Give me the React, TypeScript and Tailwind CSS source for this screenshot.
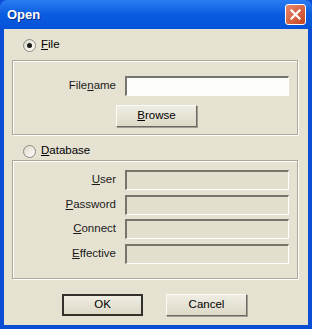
import React from 'react';

const font = { fontFamily: '"Liberation Sans", Arial, sans-serif' };

function Radio({ checked }: { checked?: boolean }) {
  return (
    <span className="w-[13px] h-[13px] rounded-full bg-gradient-to-br from-[#dcd8c8] to-white border border-[#8c8a80] flex items-center justify-center">
      {checked && <span className="w-[5px] h-[5px] rounded-full bg-[#1b1b1b]" />}
    </span>
  );
}

function Field({ label, hot, rest, enabled }: { label?: string; hot: string; rest: string; enabled?: boolean }) {
  return (
    <div className="flex items-center h-[20px]">
      <span className="w-[104px] pr-[1px] text-right text-[#1a1a1a]">
        {label}
        <span className="underline">{hot}</span>
        {rest}
      </span>
      <div
        className={`ml-[8px] flex-1 h-[20px] border-t-2 border-l-2 border-t-[#77756b] border-l-[#77756b] border-b border-r border-b-white border-r-white ${
          enabled ? 'bg-[#fdfdfb]' : 'bg-[#e3dfce]'
        }`}
      />
    </div>
  );
}

function Button({ children, isDefault }: { children: React.ReactNode; isDefault?: boolean }) {
  return (
    <button
      className={`w-[81px] h-[22px] flex items-center justify-center bg-gradient-to-b from-[#efede3] to-[#ddd9c7] text-black ${
        isDefault
          ? 'border-2 border-[#33312c]'
          : 'border border-t-[#fbfaf5] border-l-[#fbfaf5] border-r-[#6c6a60] border-b-[#6c6a60] shadow-[1px_1px_0_#a09e94]'
      }`}
    >
      {children}
    </button>
  );
}

export default function App() {
  return (
    <div style={font} className="w-[312px] h-[329px] flex flex-col bg-[#0a4ed6] text-[11.5px] overflow-hidden">
      <div className="h-[29px] flex items-center justify-between pl-[7px] pr-[6px] rounded-t-[7px] bg-gradient-to-b from-[#2a7cf2] via-[#0a5ce0] to-[#0552d8]">
        <span className="text-white font-bold text-[13px] [text-shadow:1px_1px_0_#0a2e8a]">Open</span>
        <div className="w-[21px] h-[21px] rounded-[3px] border border-white bg-gradient-to-br from-[#e8886a] to-[#c6421e] flex items-center justify-center">
          <svg width="11" height="11" viewBox="0 0 11 11">
            <path d="M1.5 1.5 L9.5 9.5 M9.5 1.5 L1.5 9.5" stroke="white" strokeWidth="2.2" strokeLinecap="square" />
          </svg>
        </div>
      </div>
      <div className="flex-1 mx-[4px] mb-[4px] bg-[#e6e2d2] flex flex-col px-[8px] pt-[8px]">
        <div className="flex items-center h-[16px] pl-[11px] gap-[5px]">
          <Radio checked />
          <span>
            <span className="underline">F</span>ile
          </span>
        </div>
        <div className="mt-[7px] mr-[2px] border border-[#aca899] shadow-[inset_1px_1px_0_white,1px_1px_0_white] pt-[15px] pb-[7px] pr-[8px] flex flex-col">
          <Field label="File" hot="n" rest="ame" enabled />
          <div className="mt-[9px] pl-[103px]">
            <Button>
              <span className="underline">B</span>rowse
            </Button>
          </div>
        </div>
        <div className="flex items-center h-[16px] mt-[8px] pl-[11px] gap-[5px]">
          <Radio />
          <span>
            <span className="underline">D</span>atabase
          </span>
        </div>
        <div className="mt-[1px] mr-[2px] border border-[#aca899] shadow-[inset_1px_1px_0_white,1px_1px_0_white] pt-[9px] pb-[14px] pr-[8px] flex flex-col gap-[4.5px]">
          <Field hot="U" rest="ser" />
          <Field hot="P" rest="assword" />
          <Field hot="C" rest="onnect" />
          <Field hot="E" rest="ffective" />
        </div>
        <div className="mt-[15px] flex gap-[23px] pl-[50px]">
          <Button isDefault>OK</Button>
          <Button>Cancel</Button>
        </div>
      </div>
    </div>
  );
}
